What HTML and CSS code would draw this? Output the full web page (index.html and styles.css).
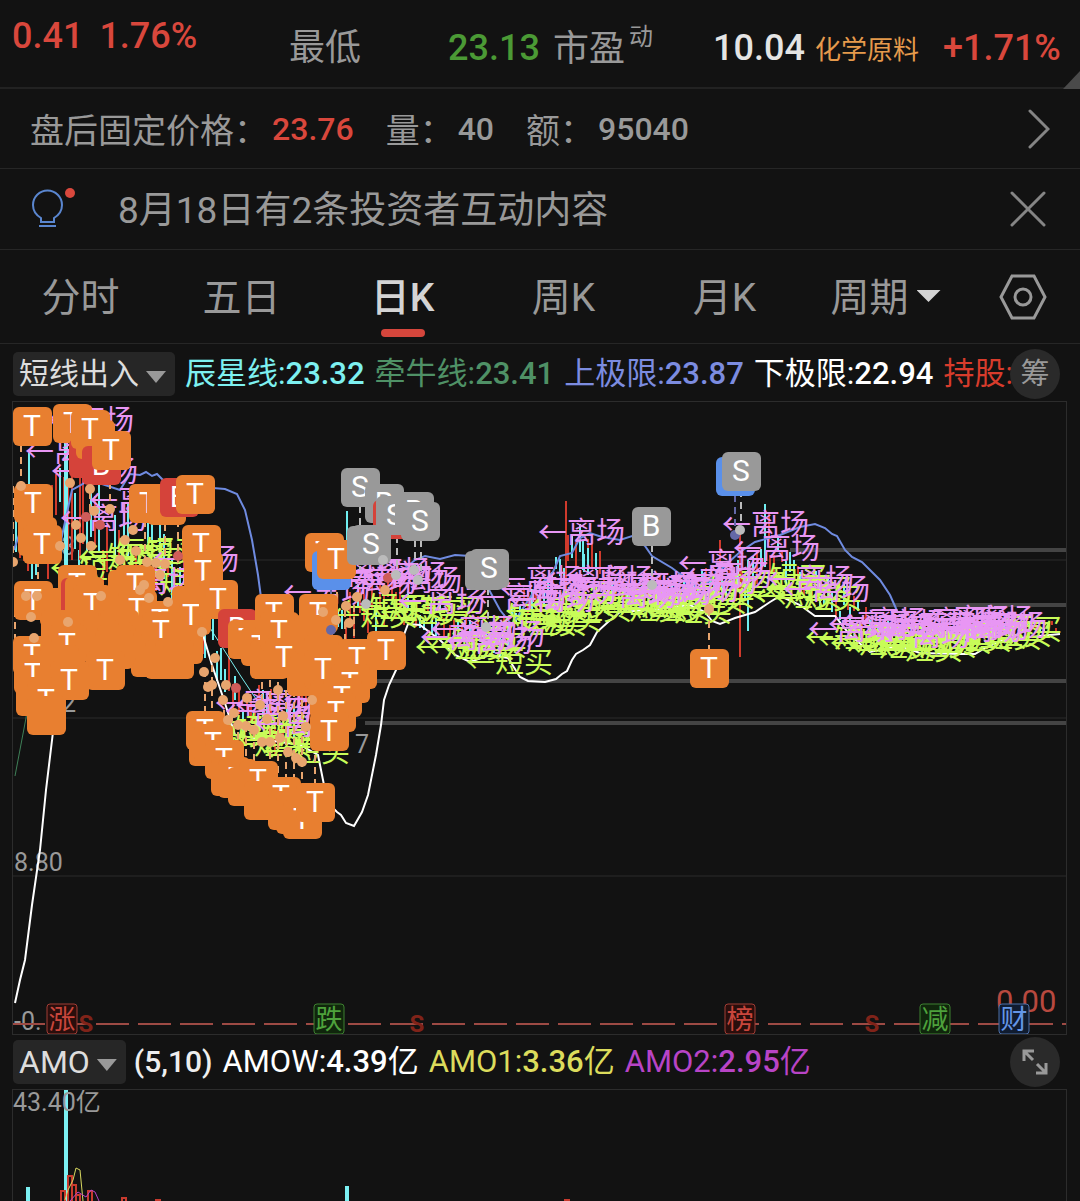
FILE: index.html
```html
<!DOCTYPE html>
<html lang="zh-CN">
<head>
<meta charset="utf-8">
<meta name="viewport" content="width=device-width, initial-scale=1">
<title>日K</title>
<link rel="stylesheet" href="styles.css">
</head>
<body>
<header class="quote">
  <span class="change num up"><span>0.41</span><span>1.76%</span></span>
  <span class="name">最低</span>
  <span class="num down">23.13</span>
  <span class="name">市盈<sup class="mark">动</sup></span>
  <span class="num bright">10.04</span>
  <a class="sector" href="#sector">化学原料</a>
  <span class="num up">+1.71%</span>
  <span class="corner"></span>
</header>

<section class="row after-hours">
  <span class="label">盘后固定价格：</span><span class="value up">23.76</span>
  <span class="label spaced">量：</span><span class="value">40</span>
  <span class="label spaced">额：</span><span class="value">95040</span>
  <button class="icon-button end" aria-label="展开">
    <svg width="24" height="42" viewBox="0 0 24 42"><path d="M4 3 22 21 4 39" class="stroke"/></svg>
  </button>
</section>

<section class="row notice">
  <svg class="bulb" width="48" height="44" viewBox="0 0 48 44">
    <path d="M11 35v-4C6 28 3 23 3 18a14 14 0 0 1 29 0c0 5-3 10-8 13v4z M9 39h17" class="bulb-line"/>
    <circle cx="40" cy="6" r="5" class="bulb-dot"/>
  </svg>
  <a class="notice-text" href="#notice">8月18日有2条投资者互动内容</a>
  <button class="icon-button end" aria-label="关闭">
    <svg width="40" height="38" viewBox="0 0 40 38"><path d="M2 3 34 35M34 3 2 35" class="stroke"/></svg>
  </button>
</section>

<nav class="tabs">
  <button class="tab">分时</button>
  <button class="tab">五日</button>
  <button class="tab active">日K</button>
  <button class="tab">周K</button>
  <button class="tab">月K</button>
  <button class="tab">周期<span class="tri tri-light"></span></button>
  <button class="settings" aria-label="设置">
    <svg width="48" height="46" viewBox="0 0 48 46"><path d="M13 2h22l11 21-11 21H13L2 23z" class="hex"/><circle cx="24" cy="23" r="8" class="hex"/></svg>
  </button>
</nav>

<main>
  <div class="legend">
    <button class="picker">短线出入<span class="tri"></span></button>
    <span class="cyan">辰星线:<b>23.32</b></span>
    <span class="green">牵牛线:<b>23.41</b></span>
    <span class="blue">上极限:<b>23.87</b></span>
    <span class="white">下极限:<b>22.94</b></span>
    <span class="red">持股:</span>
    <button class="round">筹</button>
  </div>
  <svg id="kline" class="chart" viewBox="13 402 1053 632" role="img" aria-label="日K线图"></svg>

  <div class="legend amo">
    <button class="picker">AMO<span class="tri"></span></button>
    <span class="params">(5,10)</span>
    <span class="white">AMOW:<b>4.39</b>亿</span>
    <span class="yellow">AMO1:<b>3.36</b>亿</span>
    <span class="purple">AMO2:<b>2.95</b>亿</span>
    <button class="round" aria-label="全屏">
      <svg width="28" height="28" viewBox="0 0 28 28"><path d="M3 13V3h10M3 3l9 9M25 15v10H15M25 25l-9-9" class="expand"/></svg>
    </button>
  </div>
  <svg id="volume" class="chart open" viewBox="13 1090 1053 111" role="img" aria-label="成交额"></svg>
</main>
<script src="chart.js"></script>
</body>
</html>
```
FILE: styles.css
```css
* { box-sizing: border-box; }
body {
  margin: 0;
  background: #121212;
  color: #999;
  font-family: Roboto, "Noto Sans CJK SC", sans-serif;
}
button {
  margin: 0;
  padding: 0;
  border: 0;
  background: none;
  color: inherit;
  font: inherit;
  cursor: pointer;
}
a { color: inherit; text-decoration: none; }
svg { display: block; }

.up { color: #d9473c; }
.down { color: #4b9a35; }
.bright { color: #e4e4e4; }

.quote {
  position: relative;
  display: grid;
  grid-template-columns: 277fr 159fr 105fr 160fr 102fr 128fr 137fr;
  align-items: center;
  height: 89px;
  padding: 8px 0 0 12px;
  border-bottom: 2px solid #222;
  white-space: nowrap;
}
.num { font-size: 36px; font-weight: 500; line-height: 42px; }
.change { display: flex; gap: 16px; padding-bottom: 24px; }
.name { font-size: 36px; line-height: 42px; }
.mark { font-size: 24px; line-height: 24px; margin-left: 4px; vertical-align: 16px; }
.sector { font-size: 26px; color: #e59a4c; }
.corner {
  position: absolute;
  right: 0;
  bottom: -2px;
  width: 17px;
  height: 18px;
  background: #4a4a4a;
  clip-path: polygon(100% 0, 100% 100%, 0 100%);
}

.row {
  display: flex;
  align-items: center;
  height: 80px;
  padding: 0 30px;
  border-bottom: 1px solid #262626;
  white-space: nowrap;
}
.label { font-size: 34px; }
.value { font-size: 32px; font-weight: 500; margin-left: 4px; }
.spaced { margin-left: 32px; }
.end { margin-left: auto; }
.stroke { fill: none; stroke: #858585; stroke-width: 3; stroke-linecap: round; }
.bulb-line { fill: none; stroke: #5a86cf; stroke-width: 2; }
.bulb-dot { fill: #d9483d; }
.notice { height: 81px; }
.notice-text { margin-left: 40px; padding-bottom: 4px; font-size: 37px; }

.tabs { display: flex; height: 94px; border-bottom: 1px solid #262626; }
.tab {
  position: relative;
  display: flex;
  flex: 161;
  align-items: center;
  justify-content: center;
  gap: 8px;
  padding-bottom: 5px;
  font-size: 39px;
}
.active { color: #d4d4d4; font-weight: 500; }
.active::after {
  content: "";
  position: absolute;
  bottom: 6px;
  width: 44px;
  height: 8px;
  border-radius: 4px;
  background: #d5463c;
}
.settings { display: flex; flex: 114; align-items: center; justify-content: center; }
.hex { fill: none; stroke: #999; stroke-width: 3; }
.tri {
  width: 20px;
  height: 12px;
  background: #999;
  clip-path: polygon(0 0, 100% 0, 50% 100%);
}
.tri-light { width: 24px; margin-top: 4px; background: #d4d4d4; }

main { padding: 0 14px 0 13px; }
.legend {
  display: flex;
  align-items: center;
  gap: 10px;
  height: 58px;
  padding-top: 2px;
  font-size: 31px;
  line-height: 40px;
  white-space: nowrap;
}
.legend b { font-weight: 500; }
.picker {
  display: flex;
  align-items: center;
  gap: 7px;
  height: 44px;
  padding: 0 9px 0 6px;
  border-radius: 5px;
  background: #262626;
  color: #ddd;
  font-size: 30px;
}
.picker .tri { margin-top: 6px; }
.round {
  display: flex;
  flex: none;
  align-items: center;
  justify-content: center;
  width: 50px;
  height: 50px;
  margin: 0 6px 0 auto;
  border-radius: 50%;
  background: #2a2a2a;
  font-size: 29px;
}
.legend .red { margin-right: -20px; }
.expand { fill: none; stroke: #999; stroke-width: 3; }
.amo { height: 56px; padding-top: 0; }
.amo .picker { font-size: 32px; }
.params { margin-left: -2px; color: #eee; font-size: 30px; font-weight: 500; }
.cyan { color: #7df0f0; }
.green { color: #4f9166; }
.blue { color: #7c8ce0; }
.white { color: #fff; }
.red { color: #d83c2c; }
.yellow { color: #dcdc5c; }
.purple { color: #b844c6; }

.chart { width: 100%; height: auto; outline: 1px solid #2c2c2c; overflow: hidden; }
.open { clip-path: inset(-1px -1px 0 -1px); }
.chart line, .chart polyline { fill: none; }
.grid { stroke: #2a2a2a; stroke-width: 1; }
.level { stroke: #444; stroke-width: 4; }
.line-blue { stroke: #6f8be0; stroke-width: 2; }
.line-white { stroke: #fff; stroke-width: 2; }
.line-green { stroke: #3f8058; stroke-width: 1; }
.line-yellow { stroke: #d8d860; stroke-width: 1; }
.line-purple { stroke: #b844c6; stroke-width: 1; }
.line-cyan { stroke: #7bf0f2; stroke-width: 1; }
.wick-up { stroke: #d03a2c; stroke-width: 2; }
.wick-down { stroke: #6feef0; stroke-width: 2; }
.bar-down { fill: #7bf0f2; }
.bar-up { fill: none; stroke: #c83a2e; stroke-width: 2; }
.axis { fill: #999; font-size: 25px; }
.exit { fill: #e896f4; font-size: 29px; }
.buy { fill: #c8fc58; font-size: 29px; }
.letter { fill: #fff; font-size: 30px; text-anchor: middle; }
.t { fill: #e87f30; }
.s { fill: #999; }
.r { fill: #d5433a; }
.b { fill: #5a90ea; }
.stem { stroke-width: 2; stroke-dasharray: 7 5; }
.stem-t { stroke: #e8a56e; }
.stem-s { stroke: #bbb; }
.stem-b { stroke: #6468a8; }
.dot-t { fill: #e8a56e; }
.dot-s { fill: #bbb; }
.dot-b { fill: #6468a8; }
.dot-r { fill: #cf5c5a; }
.zero { stroke: #9d4a44; stroke-width: 2; stroke-dasharray: 33 9; }
.sell { fill: #802319; font-size: 24px; font-weight: 700; text-anchor: middle; }
.price { fill: #b8493f; font-size: 31px; }
.event { font-size: 27px; text-anchor: middle; }
.event-red { fill: #c9463c; }
.event-green { fill: #4ea23c; }
.event-blue { fill: #6496e6; }
.box-red { fill: #2a0e0c; stroke: #a03c35; }
.box-green { fill: #10260c; stroke: #3d8030; }
.box-blue { fill: #101c30; stroke: #4d70a8; }
```
FILE: chart.js
```js
const NS = "http://www.w3.org/2000/svg";
const kline = document.getElementById("kline");
const volume = document.getElementById("volume");

function add(parent, tag, cls, attrs, text) {
  const el = document.createElementNS(NS, tag);
  el.setAttribute("class", cls);
  for (const key in attrs) el.setAttribute(key, attrs[key]);
  if (text) el.textContent = text;
  parent.appendChild(el);
}
const line = (cls, x1, y1, x2, y2) => add(kline, "line", cls, { x1, y1, x2, y2 });
const path = (svg, cls, points) => add(svg, "polyline", cls, { points });
const text = (cls, x, y, value) => add(kline, "text", cls, { x, y }, value);

// grid and price levels
[560, 718, 876].forEach(y => line("grid", 13, y, 1066, y));
line("level", 790, 550, 1066, 550);
line("level", 870, 605, 1066, 605);
line("level", 365, 681, 1066, 681);
line("level", 365, 723, 1066, 723);

// axis labels
text("axis", 14, 871, "8.80");
text("axis", 14, 1030, "-0.");
text("axis", 62, 712, "2");
text("axis", 61, 555, "3");
text("axis", 355, 753, "7");

// candles follow the middle of the price band
const band = [[16, 560, 70], [60, 500, 90], [75, 520, 110], [120, 560, 70], [160, 560, 60], [205, 610, 60],
  [235, 700, 40], [290, 730, 40], [330, 640, 60], [360, 600, 45], [400, 600, 40], [450, 620, 30],
  [500, 635, 25], [540, 590, 35], [580, 555, 35], [620, 585, 25], [690, 590, 20], [745, 570, 45],
  [770, 545, 40], [800, 580, 30], [850, 610, 25], [880, 630, 14], [960, 632, 14], [1058, 628, 10]];
let seed = 7;
const rand = () => (seed = (seed * 16807) % 2147483647) / 2147483647;
for (let i = 0; i < band.length - 1; i++) {
  const [xa, ya, sa] = band[i], [xb, yb, sb] = band[i + 1];
  for (let x = xa; x < xb; x += 4) {
    const k = (x - xa) / (xb - xa);
    const mid = ya + (yb - ya) * k, span = sa + (sb - sa) * k;
    const y = mid + (rand() - .5) * span, h = span * (.3 + rand() * .5);
    line(rand() > .5 ? "wick-up" : "wick-down", x, Math.round(y - h / 2), x, Math.round(y + h / 2));
  }
}
[[566, 501, 600], [740, 530, 657], [720, 540, 590], [72, 480, 560], [80, 470, 560]].forEach(([x, a, b]) => line("wick-up", x, a, x, b));
[[347, 511, 560], [748, 560, 631], [765, 504, 550], [29, 453, 520], [583, 540, 570], [588, 548, 575]].forEach(([x, a, b]) => line("wick-down", x, a, x, b));
add(kline, "rect", "bar-down", { x: 64, y: 440, width: 4, height: 130 });

// indicator lines
path(kline, "line-green", "15,776 26,718 30,690");
path(kline, "line-cyan", "205,620 240,675 260,705 290,730");
path(kline, "line-blue", "14,550 24,520 40,490 60,545 72,490 90,480 120,490 130,474 140,475 146,472 152,476 157,474 163,480");
path(kline, "line-blue", "213,488 225,489 237,494 245,510 252,540 258,575 262,605");
path(kline, "line-blue", "400,572 415,560 425,556 440,559 455,555 470,556 487,586 500,610 512,625 535,590 553,572 560,556 572,553 580,538 590,533 602,537 620,540 632,536 645,546 652,556 672,568 688,580 700,590 720,570 740,552 755,542 780,535 800,527 815,524 825,528 832,534 837,536 845,550 852,557 862,562 872,572 880,580 890,595 898,613");
path(kline, "line-white", "15,1003 20,980 25,960 32,905 40,850 46,790 53,732");
path(kline, "line-white", "203,635 212,665 224,700 235,735 300,745 318,755 324,785 330,805 337,812 341,815 346,823 354,826 362,812 368,795 376,755 381,725 384,700 389,685 397,668 402,640 408,624 420,625 440,640 455,655 470,662 490,655 508,658 520,677 528,681 545,682 556,679 562,674 567,671 572,660 576,654 583,650 590,645 597,632 608,622 620,612 650,610 690,605 705,612 712,621 720,624 735,618 755,612 770,602 780,596 800,605 815,616 835,616 850,635 870,652 900,646 920,653 960,654 975,654 985,648 1000,641 1030,637 1060,634");

// dated signals: each starts at its arrow
const buys = [[78, 568], [87, 563], [50, 579], [116, 562], [95, 571], [130, 594],
  [205, 740], [190, 745], [220, 738], [235, 748], [250, 744], [225, 755], [263, 762],
  [331, 626], [340, 618], [360, 620], [380, 623], [395, 620], [415, 658], [428, 658], [440, 656], [422, 650], [466, 673],
  [478, 628], [490, 634], [500, 634], [505, 622], [515, 630], [530, 616], [545, 620], [560, 606], [575, 612], [590, 614], [600, 620], [612, 616],
  [625, 620], [635, 614], [645, 622], [660, 612], [668, 607], [680, 600], [700, 595], [740, 588], [755, 607], [765, 600], [775, 609], [745, 598],
  [805, 648], [818, 650], [830, 654], [842, 650], [850, 657], [865, 650], [876, 660], [895, 650], [890, 656], [905, 652], [925, 650], [940, 647], [955, 648], [965, 645], [975, 640]];
buys.forEach(([x, y]) => text("buy", x, y, "←短买"));
const exits = [[47, 431], [25, 462], [51, 482], [89, 511], [60, 529], [152, 570], [110, 592],
  [215, 714], [225, 722], [235, 716], [255, 735], [283, 603],
  [318, 585], [330, 592], [345, 582], [362, 586], [375, 591], [398, 612], [420, 648], [430, 640], [446, 652], [458, 645], [476, 608],
  [497, 590], [508, 610], [500, 600], [538, 543], [530, 602], [545, 590], [568, 590], [580, 597], [590, 606], [600, 600],
  [612, 596], [625, 603], [640, 598], [652, 600], [678, 574], [670, 592], [685, 586], [722, 535], [733, 559],
  [767, 590], [783, 600], [808, 640], [828, 635], [841, 632], [850, 638], [860, 634], [883, 646], [890, 636], [903, 632],
  [918, 636], [925, 630], [935, 640], [948, 630], [942, 638], [960, 636]];
exits.forEach(([x, y]) => text("exit", x, y, "←离场"));

// trade stems: type, x, top, bottom
[["s", 360, 506, 570], ["s", 384, 530, 560], ["s", 397, 536, 575], ["s", 415, 540, 570], ["s", 421, 540, 580], ["s", 488, 588, 626],
  ["s", 652, 545, 585], ["b", 735, 495, 533], ["s", 741, 490, 530], ["t", 709, 609, 650],
  ["t", 21, 445, 486], ["t", 13, 486, 560], ["t", 90, 480, 520], ["t", 110, 470, 510], ["t", 38, 560, 590], ["t", 15, 610, 640], ["t", 145, 520, 560], ["t", 165, 524, 560], ["t", 178, 520, 570],
  ["t", 205, 670, 716], ["t", 212, 665, 716], ["t", 224, 710, 740], ["t", 232, 715, 750], ["t", 238, 720, 760], ["t", 246, 725, 765], ["t", 254, 730, 770],
  ["t", 262, 670, 700], ["t", 270, 680, 780], ["t", 278, 670, 785], ["t", 286, 690, 790], ["t", 294, 690, 795], ["t", 302, 700, 790], ["t", 315, 755, 785], ["t", 325, 615, 660], ["b", 331, 590, 630], ["t", 337, 580, 620], ["t", 345, 610, 640], ["t", 354, 605, 640]
].forEach(([k, x, a, b]) => line("stem stem-" + k, x, a, x, b));

// trade flags: type, left, top, letter
const flags = [["t", 53, 404, "T"], ["r", 69, 439], ["t", 76, 420], ["t", 71, 410, "T"], ["r", 82, 446, "B"], ["t", 92, 431, "T"], ["t", 13, 407, "T"],
  ["t", 129, 484, "T"], ["t", 147, 486], ["r", 160, 478, "B"], ["t", 176, 475, "T"], ["t", 14, 484, "T"], ["t", 18, 517], ["t", 23, 525, "T"],
  ["t", 182, 525, "T"], ["t", 184, 552, "T"], ["t", 40, 588], ["t", 14, 581, "T"], ["t", 58, 565, "T"], ["r", 61, 578], ["t", 65, 577], ["t", 73, 585, "T"],
  ["t", 108, 570], ["t", 116, 565, "T"], ["t", 100, 590], ["t", 118, 590, "T"], ["t", 100, 610], ["t", 41, 610], ["t", 60, 610], ["t", 80, 620],
  ["t", 172, 586], ["t", 164, 602], ["t", 160, 625], ["t", 172, 596, "T"], ["t", 164, 625], ["t", 126, 622], ["t", 141, 601, "T"], ["t", 142, 612, "T"], ["t", 131, 638], ["t", 145, 640], ["t", 155, 640],
  ["t", 97, 625, "T"], ["t", 95, 630], ["t", 48, 625, "T"], ["t", 86, 651, "T"], ["t", 13, 636, "T"], ["t", 14, 655, "T"], ["t", 40, 645], ["t", 50, 661, "T"], ["t", 16, 677], ["t", 27, 681, "T"], ["t", 27, 696],
  ["t", 199, 580, "T"], ["r", 218, 609, "B"], ["t", 228, 620, "T"], ["t", 241, 627, "T"], ["t", 250, 640], ["t", 255, 594, "T"], ["t", 260, 612, "T"], ["t", 265, 638, "T"],
  ["t", 299, 594, "T"], ["t", 294, 615], ["t", 287, 657], ["t", 304, 635], ["t", 304, 650, "T"], ["t", 338, 650], ["t", 367, 631, "T"], ["t", 338, 639, "T"],
  ["t", 310, 680], ["t", 331, 664, "T"], ["t", 323, 678, "T"], ["t", 317, 693, "T"], ["t", 310, 712, "T"],
  ["t", 186, 711, "T"], ["t", 189, 727], ["t", 194, 724, "T"], ["t", 205, 740, "T"], ["t", 211, 757], ["t", 218, 759, "T"], ["t", 228, 767], ["t", 239, 761, "T"], ["t", 244, 781], ["t", 262, 777, "T"], ["t", 268, 791], ["t", 276, 795], ["t", 283, 800, "T"], ["t", 296, 783, "T"],
  ["t", 305, 533, "T"], ["b", 312, 551], ["t", 317, 540, "T"],
  ["s", 341, 468, "S"], ["s", 365, 484, "B"], ["r", 373, 500], ["s", 376, 496, "S"], ["s", 395, 492, "B"], ["s", 401, 502, "S"], ["s", 347, 526], ["s", 352, 525, "S"],
  ["s", 465, 551], ["s", 470, 549, "S"], ["b", 716, 457], ["s", 722, 452, "S"], ["s", 632, 507, "B"], ["t", 690, 649, "T"]];
flags.forEach(([k, x, y, letter]) => {
  add(kline, "rect", k, { x, y, width: 39, height: 39, rx: 6 });
  if (letter) text("letter", x + 19, y + 29, letter);
});

// trade dots
const dots = {
  t: [[21, 486], [13, 562], [70, 483], [90, 489], [110, 509], [94, 511], [76, 525], [81, 538], [91, 546], [60, 546], [120, 560], [136, 551], [125, 540], [133, 530], [147, 562], [156, 563], [165, 564], [160, 575],
    [26, 596], [37, 596], [31, 617], [34, 638], [68, 622], [101, 596], [140, 590], [144, 585], [149, 598], [168, 602], [202, 632], [204, 672], [208, 687], [212, 685], [215, 658],
    [226, 685], [247, 698], [260, 705], [223, 700], [234, 713], [228, 720], [238, 725], [246, 726], [254, 730], [267, 719], [283, 716], [278, 690], [262, 742], [270, 742], [280, 738], [288, 752], [296, 758], [302, 762], [306, 727], [312, 700], [323, 612], [336, 620], [346, 606], [349, 623], [357, 597], [385, 590], [709, 609]],
  r: [[86, 517], [100, 525], [236, 688], [178, 556], [388, 578]],
  b: [[331, 630], [735, 535]],
  s: [[366, 604], [383, 560], [396, 575], [414, 570], [418, 580], [486, 627], [652, 585], [740, 530]]
};
for (const k in dots) dots[k].forEach(([cx, cy]) => add(kline, "circle", "dot-" + k, { cx, cy, r: 5 }));

// zero line with events
line("zero", 12, 1024, 1066, 1024);
[86, 417, 872].forEach(x => text("sell", x, 1032, "S"));
text("price", 996, 1012, "0.00");
[["涨", 47, "red"], ["跌", 314, "green"], ["榜", 725, "red"], ["减", 920, "green"], ["财", 999, "blue"]].forEach(([word, x, hue]) => {
  add(kline, "rect", "box-" + hue, { x, y: 1004, width: 30, height: 30, rx: 3 });
  text("event event-" + hue, x + 15, 1029, word);
});

// turnover bars: x, top
[[26, 1187], [64, 1090], [345, 1186]].forEach(([x, y]) => add(volume, "rect", "bar-down", { x, y, width: 4, height: 1201 - y }));
[[61, 1191], [68, 1176], [72, 1185], [76, 1195], [88, 1191], [122, 1198], [156, 1200], [565, 1200]].forEach(([x, y]) => add(volume, "rect", "bar-up", { x, y, width: 4, height: 1202 - y }));
path(volume, "line-yellow", "65,1200 68,1190 73,1180 76,1168 80,1170 83,1201");
path(volume, "line-purple", "70,1201 78,1192 86,1197 91,1190 95,1192 99,1201");
add(volume, "text", "axis", { x: 13, y: 1111 }, "43.40亿");
```
